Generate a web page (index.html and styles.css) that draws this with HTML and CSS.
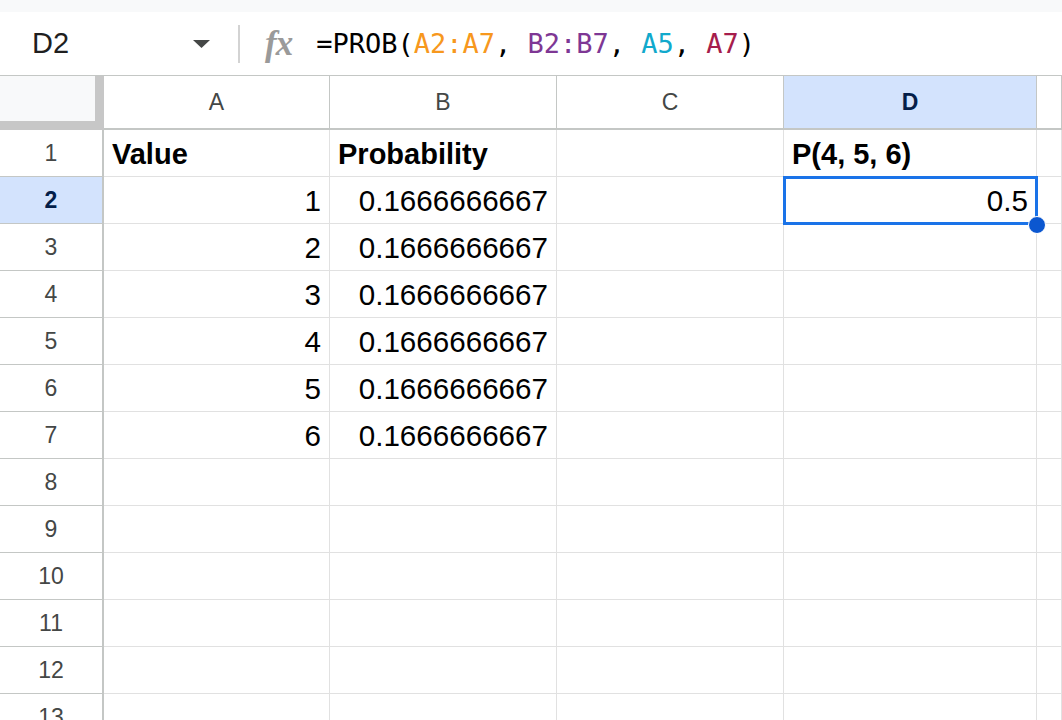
FILE: index.html
```html
<!DOCTYPE html>
<html>
<head>
<meta charset="utf-8">
<link rel="stylesheet" href="styles.css">
</head>
<body>
<div class="topstrip"></div>
<div class="fbar">
  <div class="namebox">
    <span class="ref">D2</span>
    <svg class="caret" width="17" height="8" viewBox="0 0 17 8"><polygon points="0,0 17,0 8.5,8" fill="#444746"/></svg>
  </div>
  <div class="sep"></div>
  <span class="fx">fx</span>
  <div class="formula">=PROB(<span class="c1">A2:A7</span>, <span class="c2">B2:B7</span>, <span class="c3">A5</span>, <span class="c4">A7</span>)</div>
</div>
<div class="sheet">
  <div class="corner"></div>
  <div class="ch">A</div>
  <div class="ch">B</div>
  <div class="ch">C</div>
  <div class="ch active">D</div>
  <div class="ch"></div>

  <div class="rh">1</div>
  <div class="cell bold">Value</div>
  <div class="cell bold">Probability</div>
  <div class="cell"></div>
  <div class="cell bold">P(4, 5, 6)</div>
  <div class="cell"></div>

  <div class="rh active">2</div>
  <div class="cell num">1</div>
  <div class="cell num">0.1666666667</div>
  <div class="cell"></div>
  <div class="cell num selected">0.5<div class="sel"></div><div class="handle"></div></div>
  <div class="cell"></div>

  <div class="rh">3</div>
  <div class="cell num">2</div>
  <div class="cell num">0.1666666667</div>
  <div class="cell"></div><div class="cell"></div><div class="cell"></div>

  <div class="rh">4</div>
  <div class="cell num">3</div>
  <div class="cell num">0.1666666667</div>
  <div class="cell"></div><div class="cell"></div><div class="cell"></div>

  <div class="rh">5</div>
  <div class="cell num">4</div>
  <div class="cell num">0.1666666667</div>
  <div class="cell"></div><div class="cell"></div><div class="cell"></div>

  <div class="rh">6</div>
  <div class="cell num">5</div>
  <div class="cell num">0.1666666667</div>
  <div class="cell"></div><div class="cell"></div><div class="cell"></div>

  <div class="rh">7</div>
  <div class="cell num">6</div>
  <div class="cell num">0.1666666667</div>
  <div class="cell"></div><div class="cell"></div><div class="cell"></div>

  <div class="rh">8</div>
  <div class="cell"></div><div class="cell"></div><div class="cell"></div><div class="cell"></div><div class="cell"></div>
  <div class="rh">9</div>
  <div class="cell"></div><div class="cell"></div><div class="cell"></div><div class="cell"></div><div class="cell"></div>
  <div class="rh">10</div>
  <div class="cell"></div><div class="cell"></div><div class="cell"></div><div class="cell"></div><div class="cell"></div>
  <div class="rh">11</div>
  <div class="cell"></div><div class="cell"></div><div class="cell"></div><div class="cell"></div><div class="cell"></div>
  <div class="rh">12</div>
  <div class="cell"></div><div class="cell"></div><div class="cell"></div><div class="cell"></div><div class="cell"></div>
  <div class="rh">13</div>
  <div class="cell"></div><div class="cell"></div><div class="cell"></div><div class="cell"></div><div class="cell"></div>
</div>
</body>
</html>
```

FILE: styles.css
```css
html, body {
  margin: 0;
  padding: 0;
  background: #ffffff;
}
body {
  width: 1062px;
  height: 720px;
  overflow: hidden;
  font-family: "Liberation Sans", Arial, sans-serif;
  color: #000000;
}
.topstrip {
  height: 12px;
  background: #f8f9fa;
}
.fbar {
  height: 63px;
  border-bottom: 1px solid #c4c7c5;
  display: flex;
  align-items: center;
  background: #ffffff;
}
.namebox {
  width: 238px;
  box-sizing: border-box;
  padding-left: 32px;
  padding-right: 28px;
  display: flex;
  align-items: center;
  justify-content: space-between;
}
.ref {
  font-size: 29px;
  color: #1f1f1f;
}
.caret {
  display: block;
  margin-top: 1px;
}
.sep {
  width: 2px;
  height: 38px;
  background: #d3d3d3;
}
.fx {
  margin-left: 25px;
  font-family: "Liberation Serif", "Times New Roman", serif;
  font-style: italic;
  font-weight: bold;
  font-size: 35px;
  color: #9a9a9a;
  letter-spacing: -1px;
}
.formula {
  margin-left: 24px;
  font-family: "DejaVu Sans Mono", "Liberation Mono", monospace;
  font-size: 27px;
  color: #000000;
  white-space: pre;
}
.c1 { color: #f7981d; }
.c2 { color: #7e3794; }
.c3 { color: #11a9cc; }
.c4 { color: #a61d4c; }

.sheet {
  display: grid;
  grid-template-columns: 104px 226px 227px 227px 253px 1fr;
  grid-template-rows: 54px;
  grid-auto-rows: 47px;
}
.corner {
  background: #f8f9fa;
  box-shadow: inset -9px -9px 0 #c7c7c7;
}
.ch {
  box-sizing: border-box;
  border-right: 1px solid #c4c7c5;
  border-bottom: 2px solid #c4c7c5;
  display: flex;
  align-items: center;
  justify-content: center;
  font-size: 23px;
  color: #444746;
  background: #ffffff;
}
.ch.active, .rh.active {
  background: #d3e3fd;
  color: #041e49;
  font-weight: bold;
}
.rh {
  box-sizing: border-box;
  border-right: 2px solid #c4c7c5;
  border-bottom: 1px solid #c4c7c5;
  display: flex;
  align-items: center;
  justify-content: center;
  font-size: 23px;
  color: #444746;
  background: #ffffff;
}
.cell {
  box-sizing: border-box;
  border-right: 1px solid #e1e1e1;
  border-bottom: 1px solid #e1e1e1;
  display: flex;
  align-items: flex-end;
  padding: 0 8px 5px 8px;
  font-size: 29px;
  line-height: 1.15;
  white-space: nowrap;
  overflow: visible;
}
.cell.bold {
  font-weight: bold;
}
.cell.num {
  justify-content: flex-end;
  font-size: 29.6px;
}
.cell.selected {
  position: relative;
}
.sel {
  position: absolute;
  left: -1px;
  top: -1px;
  right: -2px;
  bottom: -2px;
  border: 3px solid #1a73e8;
  pointer-events: none;
}
.handle {
  position: absolute;
  right: -10px;
  bottom: -11px;
  width: 16px;
  height: 16px;
  border-radius: 50%;
  background: #0b57d0;
  border: 1px solid #ffffff;
  z-index: 2;
}
```
